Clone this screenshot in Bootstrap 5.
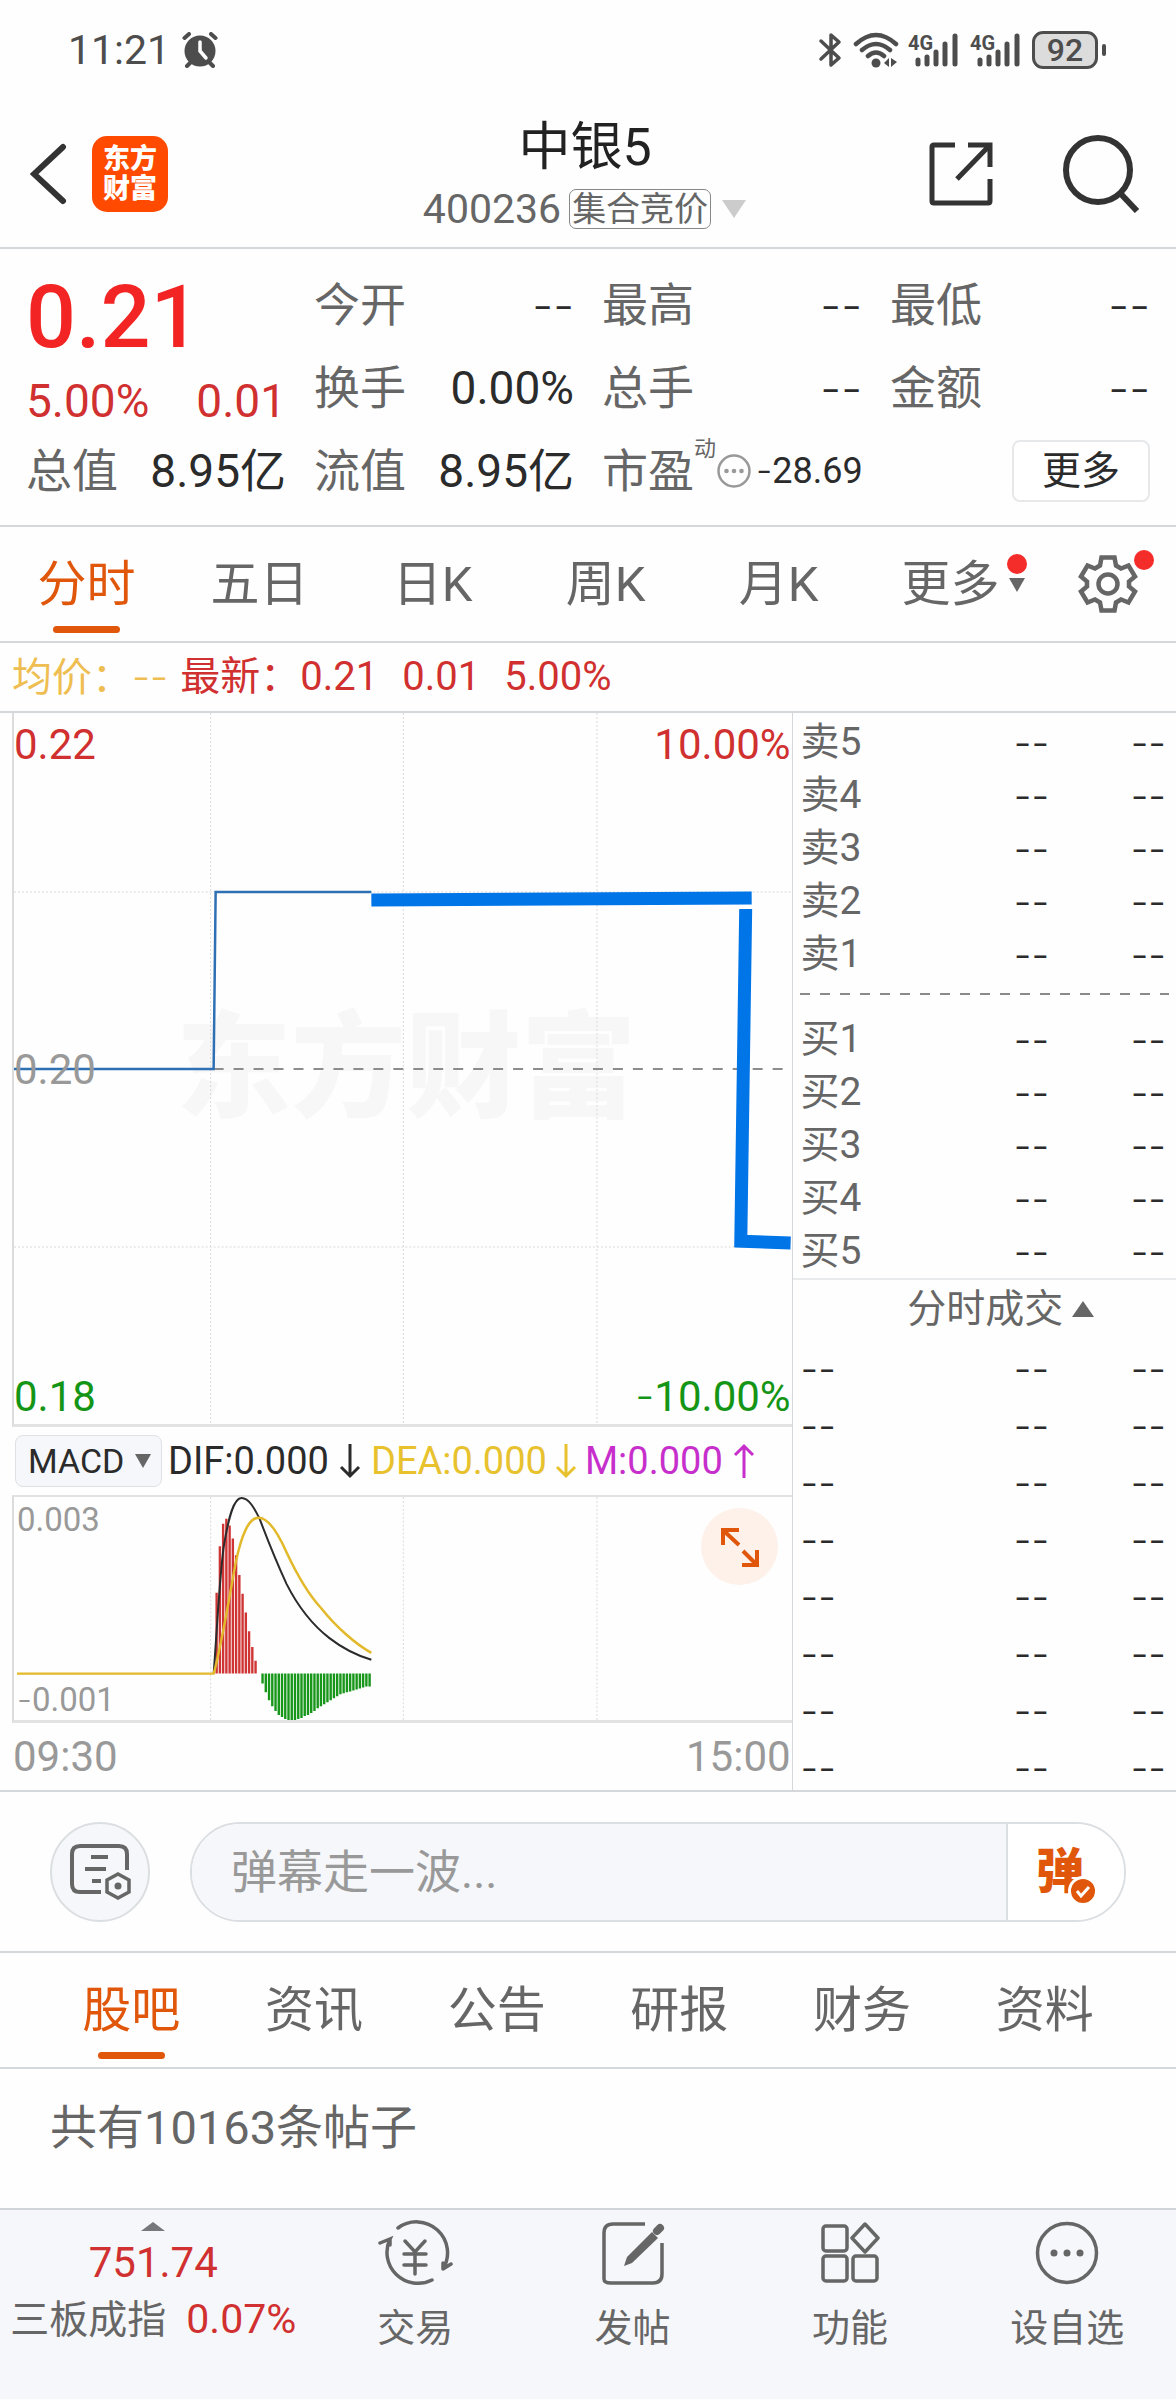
<!DOCTYPE html>
<html lang="zh-CN">
<head>
<meta charset="utf-8">
<meta name="viewport" content="width=device-width, initial-scale=1">
<title>中银5 400236</title>
<link rel="stylesheet" href="https://cdn.jsdelivr.net/npm/bootstrap@5.3.0/dist/css/bootstrap.min.css">
<style>
  :root { --ink:#2b2b2b; --grey:#666; --pale:#999; --line:#d5d8da; --soft:#f6f7fa; --red:#d0302f; --orange:#e0570c; --green:#159515; --gold:#e8c22e; }
  body { font-family: Roboto, "Noto Sans CJK SC", sans-serif; font-size: 46px; line-height: 60px; color: var(--grey); background: #fefefe; }
  svg { display: block; flex: none; }
  button { font-family: inherit; }
  .plain-btn { border: 0; background: none; padding: 0; color: inherit; display: block; }
  .rule { border-bottom: 2px solid var(--line); }
  .dash { font-family: Inter, sans-serif; font-weight: 300; }
  .ink { color: var(--ink); }
  .up { color: var(--red); }
  .down { color: var(--green); }
  .gold { color: var(--gold); }
  .violet { color: #c62fcb; }

  .statusbar { height: 100px; padding: 0 70px 0 68px; color: #4d4d4d; font-size: 41px; }
  .battery { width: 66px; height: 38px; border: 3px solid #4d4d4d; border-radius: 11px; background: #dcdcdc; font-size: 32px; line-height: 32px; font-weight: 500; }
  .battery-nub { width: 4px; height: 12px; border-radius: 2px; background: #4d4d4d; }

  .topbar { display: grid; grid-template-columns: 1fr auto 1fr; height: 149px; padding: 0 36px 0 30px; }
  .brand { width: 76px; height: 76px; border-radius: 15px; background: #ff4a00; color: #fff; font-size: 27px; line-height: 30px; font-weight: 900; }
  .stock-name { font-size: 52px; line-height: 62px; font-weight: 400; color: #222; margin: 0; }
  .stock-code { font-size: 41px; line-height: 52px; }
  .phase { border: 1px solid #888; border-radius: 7px; font-size: 34px; line-height: 38px; padding: 0 2px; }

  .quote { padding: 14px 26px 13px; border-bottom: 2px solid var(--line); }
  .quote .row { --bs-gutter-x: 28px; }
  .line { display: flex; justify-content: space-between; align-items: center; height: 83px; white-space: nowrap; }
  .price { font-size: 88px; line-height: 108px; font-weight: 500; color: #f32524; }
  .change { font-size: 46px; line-height: 60px; margin-bottom: -2px; }
  .val { color: var(--ink); }
  .more-btn { width: 138px; border: 2px solid #e6e8ea; border-radius: 8px; background: #fff; color: var(--ink); font-size: 39px; line-height: 58px; padding: 0; }
  .tiny { font-size: 22px; line-height: 24px; }
  .pe { font-size: 36px; }

  .period { display: grid; grid-template-columns: repeat(5, 173fr) 197fr 114fr; height: 116px; }
  .tab-link { display: flex; flex-direction: column; align-items: center; justify-content: center; font-size: 49px; line-height: 60px; color: var(--grey); text-decoration: none; position: relative; }
  .tab-link.active { color: var(--orange); }
  .tab-link.active::after { content: ""; position: absolute; bottom: 8px; width: 67px; height: 7px; border-radius: 4px; background: var(--orange); }
  .period .tab-link { padding-top: 2px; }
  .dot { position: absolute; width: 20px; height: 20px; border-radius: 50%; background: #f42c2a; top: -24px; left: 50%; margin-left: -10px; }
  .dot-gear { top: -4px; left: auto; right: -16px; }

  .legend-bar { font-size: 40px; height: 70px; padding-left: 12px; }
  .legend-gold { color: #efbe52; }

  .chart-side { width: 67.4%; padding-left: 12px; border-right: 1px solid var(--line); }
  .book-side { width: 32.6%; }
  .plot { position: relative; border-left: 2px solid #dcdcdc; border-bottom: 3px solid #e2e2e2; }
  .plot svg.canvas { position: relative; width: 100%; }
  .plot-label { position: absolute; font-size: 42px; line-height: 48px; left: 0; }
  .plot-label.end { left: auto; right: 1px; }
  .plot-label.mid { top: 50%; margin-top: -23px; color: var(--pale); }
  .plot-label.top-edge { top: 8px; }
  .plot-label.low-edge { bottom: 3px; }
  .plot-label.sub { font-size: 33px; line-height: 40px; left: 3px; color: var(--pale); }
  .plot-label.sub.top-edge { top: 3px; }
  .plot-label.sub.low-edge { bottom: 0; }
  .watermark { position: absolute; inset: 0; display: flex; align-items: center; padding-left: 162px; font-size: 115px; font-weight: 900; color: #f7f7f7; }
  .indicator { height: 68px; padding-left: 3px; font-size: 38px; line-height: 50px; white-space: nowrap; }
  .pick { position: relative; width: 147px; margin-right: 6px; }
  .pick select { appearance: none; width: 100%; height: 52px; border: 1px solid #dfe1e4; border-radius: 8px; background: var(--soft); color: var(--ink); font: 34px Roboto, sans-serif; padding: 0 0 0 12px; }
  .pick svg { position: absolute; right: 10px; top: 19px; pointer-events: none; }
  .arrow { margin: 0 10px; }
  .macd-plot { border-top: 2px solid #e2e2e2; }
  .expand { position: absolute; right: 14px; top: 11px; width: 77px; height: 77px; border-radius: 50%; background: #fdf1ea; }
  .times { font-size: 42px; height: 67px; color: var(--pale); padding: 0 1px; }

  .book { width: 100%; font-size: 39px; line-height: 53px; table-layout: fixed; }
  .book th { font-weight: 400; padding: 0; width: 40%; }
  .book td { padding: 0; text-align: right; color: var(--ink); }
  .book td:nth-child(2) { width: 28%; }
  .book-wrap { padding: 0 10px 0 8px; }
  .asks { padding-top: 3px; }
  .spread { height: 2px; margin: 12px 7px 18px; background: repeating-linear-gradient(90deg, #8a8a8a 0 10px, transparent 10px 20px); }
  .deals-title { border-top: 2px solid #e8eaeb; font-size: 39px; line-height: 58px; padding-left: 34px; }
  .deals { line-height: 45px; }
  .deals th { color: var(--ink); font-weight: 300; }
  .deals tr:not(:last-child) > * { padding-bottom: 12px; }

  .danmu { padding: 30px 50px 29px; gap: 40px; border-top: 2px solid var(--line); border-bottom: 2px solid var(--line); }
  .round-btn { width: 100px; height: 100px; border: 2px solid #dcdfe2; border-radius: 50%; background: var(--soft); padding: 0; flex: none; }
  .pill { height: 100px; border: 2px solid #dcdfe2; border-radius: 50px; overflow: hidden; }
  .pill input { border: 0; background: var(--soft); font-size: 46px; padding: 0 39px; min-width: 0; color: var(--ink); outline: 0; }
  .pill input::placeholder { color: var(--pale); opacity: 1; }
  .dan { width: 118px; border: 0; border-left: 2px solid #dcdfe2; background: #fff; color: var(--orange); font-size: 48px; line-height: 60px; font-weight: 900; padding: 0 12px 0 0; }
  .dan-mark { position: relative; display: inline-block; }
  .dan-mark svg { position: absolute; right: -14px; bottom: -4px; }

  .sections { display: grid; grid-template-columns: repeat(6, 1fr); height: 116px; padding: 0 40px; }
  .sections .tab-link { padding-top: 2px; }
  .posts { height: 139px; padding: 29px 50px; font-size: 47px; }

  .dock { display: grid; grid-template-columns: 306fr repeat(4, 217fr); height: 191px; background: var(--soft); border-top: 2px solid #d0d5da; }
  .dock a { color: var(--grey); text-decoration: none; }
  .dock-item { font-size: 38px; line-height: 50px; padding-top: 7px; display: flex; flex-direction: column; align-items: center; gap: 14px; }
  .index-name { font-size: 39px; line-height: 56px; white-space: nowrap; }
  .index-pct { font-size: 41px; margin-left: 20px; }
  .index-val { font-size: 42px; line-height: 56px; }
</style>
</head>
<body>

<header>
  <div class="statusbar d-flex align-items-center justify-content-between">
    <div class="d-flex align-items-center gap-2">
      <span>11:21</span>
      <svg class="ms-1" width="36" height="36" viewBox="0 0 36 36" fill="none" stroke="#4d4d4d" stroke-width="4" stroke-linecap="round"><circle cx="18" cy="19" r="15.500" fill="#4d4d4d" stroke="none"/><path d="M2.500 6 7 2M33.500 6 29 2M5 34l4-4M31 34l-4-4"/><path d="M18 10v9l6 7" stroke="#fff" stroke-width="3.500"/></svg>
    </div>
    <div class="d-flex align-items-center">
      <svg class="me-2" width="26" height="36" viewBox="0 0 26 36" fill="none" stroke="#4d4d4d" stroke-width="3.500" stroke-linejoin="round" stroke-linecap="round"><path d="M3 9 21 26l-8 7V3l8 7L3 27"/></svg>
      <svg class="me-2" width="48" height="36" viewBox="0 0 48 36" fill="none" stroke="#4d4d4d" stroke-width="4.500" stroke-linecap="round"><path d="M4 12Q24-6 44 12M10 18Q24 6 38 18M16 24Q24 17 32 24"/><circle cx="24" cy="31" r="4.500" fill="#4d4d4d" stroke="none"/><path d="M37 26v9l-5-4zM39 26v9l6-5z" fill="#4d4d4d" stroke="none"/></svg>
      <svg class="me-2" width="54" height="36" viewBox="0 0 54 36" stroke="#4d4d4d" stroke-width="5" stroke-linecap="round"><text x="0" y="18" font-family="Roboto" font-weight="700" font-size="20" fill="#4d4d4d" stroke="none">4G</text><path d="M10 28v4M19 25v7M28 20v12M37 12v20M47 4v28"/></svg>
      <svg class="me-2" width="54" height="36" viewBox="0 0 54 36" stroke="#4d4d4d" stroke-width="5" stroke-linecap="round"><text x="0" y="18" font-family="Roboto" font-weight="700" font-size="20" fill="#4d4d4d" stroke="none">4G</text><path d="M10 28v4M19 25v7M28 20v12M37 12v20M47 4v28"/></svg>
      <span class="battery text-center">92</span><span class="battery-nub ms-1"></span>
    </div>
  </div>

  <div class="topbar rule align-items-center">
    <div class="d-flex align-items-center gap-4">
      <button class="plain-btn" type="button" aria-label="返回"><svg width="38" height="64" viewBox="0 0 38 64" fill="none" stroke="#333" stroke-width="6" stroke-linecap="round"><path d="M33 5 4 32l29 27"/></svg></button>
      <a href="#" class="brand text-decoration-none d-flex flex-column align-items-center justify-content-center"><span>东方</span><span>财富</span></a>
    </div>
    <div class="text-center pt-1">
      <h1 class="stock-name">中银5</h1>
      <div class="stock-code d-flex align-items-center mt-1">
        <span>400236</span><span class="phase ms-2">集合竞价</span>
        <svg class="ms-2" width="28" height="18" viewBox="0 0 28 18"><path d="M3 0h24L15 18z" fill="#ccc"/></svg>
      </div>
    </div>
    <div class="d-flex align-items-center justify-content-end">
      <button class="plain-btn me-5" type="button" aria-label="分享"><svg class="me-3" width="70" height="66" viewBox="0 0 70 66" fill="none" stroke="#333" stroke-width="5"><path d="M27 4H6q-2 0-2 2v54q0 2 2 2h54q2 0 2-2V38M40 4h22v22M61 5 29 38"/></svg></button>
      <button class="plain-btn" type="button" aria-label="搜索"><svg width="78" height="78" viewBox="0 0 78 78" fill="none" stroke="#333" stroke-width="6"><circle cx="36" cy="35" r="32"/><path d="M58 58l17 18"/></svg></button>
    </div>
  </div>
</header>

<main>
  <section class="quote">
    <div class="row">
      <div class="col-3">
        <div class="price">0.21</div>
        <div class="change up d-flex justify-content-between"><span>5.00%</span><span>0.01</span></div>
        <div class="line"><span>总值</span><span class="val">8.95亿</span></div>
      </div>
      <div class="col-3">
        <div class="line"><span>今开</span><span class="val dash">--</span></div>
        <div class="line"><span>换手</span><span class="val">0.00%</span></div>
        <div class="line"><span>流值</span><span class="val">8.95亿</span></div>
      </div>
      <div class="col-3">
        <div class="line"><span>最高</span><span class="val dash">--</span></div>
        <div class="line"><span>总手</span><span class="val dash">--</span></div>
        <div class="line">
          <span>市盈</span><span class="tiny align-self-start pt-2">动</span>
          <svg width="36" height="36" viewBox="0 0 36 36"><circle cx="18" cy="18" r="15.500" fill="none" stroke="#999" stroke-width="2.500"/><g fill="#999"><circle cx="10.500" cy="18" r="2.300"/><circle cx="18" cy="18" r="2.300"/><circle cx="25.500" cy="18" r="2.300"/></g></svg>
          <span class="val pe ms-1"><span class="dash">-</span>28.69</span>
        </div>
      </div>
      <div class="col-3">
        <div class="line"><span>最低</span><span class="val dash">--</span></div>
        <div class="line"><span>金额</span><span class="val dash">--</span></div>
        <div class="line justify-content-end"><button class="more-btn" type="button">更多</button></div>
      </div>
    </div>
  </section>

  <nav class="period rule">
    <a href="#" class="tab-link active">分时</a>
    <a href="#" class="tab-link">五日</a>
    <a href="#" class="tab-link">日K</a>
    <a href="#" class="tab-link">周K</a>
    <a href="#" class="tab-link">月K</a>
    <a href="#" class="tab-link flex-row">更多<span class="position-relative ms-2"><svg width="18" height="14" viewBox="0 0 18 14"><path d="M1 0h16L9 14z" fill="#666"/></svg><i class="dot"></i></span></a>
    <button class="plain-btn d-flex align-items-center ps-3" type="button" aria-label="设置"><span class="position-relative"><svg width="60" height="60" viewBox="0 0 60 60" fill="none" stroke="#666" stroke-width="4.500"><path d="M23.500 3.500h13l1.500 8 5 3 7.500-3 6.500 11-6 5v5l6 5-6.500 11-7.500-3-5 3-1.500 8h-13l-1.500-8-5-3-7.500 3-6.500-11 6-5v-5l-6-5 6.500-11 7.500 3 5-3z"/><circle cx="30" cy="30" r="9.500"/></svg><i class="dot dot-gear"></i></span></button>
  </nav>

  <div class="legend-bar rule d-flex align-items-center">
    <span class="legend-gold">均价：<span class="dash">--</span></span>
    <span class="up ms-2 ps-1 d-flex gap-4"><span>最新：0.21</span><span>0.01</span><span>5.00%</span></span>
  </div>

  <section class="d-flex">
    <div class="chart-side">
      <div class="plot">
        <div class="watermark">东方财富</div>
        <svg class="canvas" height="711" viewBox="0 0 779 711" preserveAspectRatio="none" fill="none">
          <path d="M197 0v711M390 0v711M584 0v711M0 179h779M0 534h779" stroke="#dadada" stroke-dasharray="2 2"/>
          <path d="M0 356h779" stroke="#8c8c8c" stroke-width="2" stroke-dasharray="10 10"/>
          <path d="M0 356h200l2-177h156" stroke="#2f6fb3" stroke-width="2.500"/>
          <path d="M358 187 739 185M733 196 728 534M722 528l56 2" stroke="#0075e8" stroke-width="13"/>
        </svg>
        <span class="plot-label top-edge up">0.22</span>
        <span class="plot-label top-edge end up">10.00%</span>
        <span class="plot-label mid">0.20</span>
        <span class="plot-label low-edge down">0.18</span>
        <span class="plot-label low-edge end down"><span class="dash">-</span>10.00%</span>
      </div>

      <div class="indicator d-flex align-items-center">
        <div class="pick">
          <select aria-label="指标"><option>MACD</option></select>
          <svg width="18" height="14" viewBox="0 0 18 14"><path d="M1 0h16L9 14z" fill="#666"/></svg>
        </div>
        <span class="ink">DIF:0.000</span>
        <svg class="arrow" width="22" height="36" viewBox="0 0 22 36" fill="none" stroke="#2b2b2b" stroke-width="3"><path d="M11 1v32M2 24l9 9 9-9"/></svg>
        <span class="gold">DEA:0.000</span>
        <svg class="mx-2" width="22" height="36" viewBox="0 0 22 36" fill="none" stroke="#e8c22e" stroke-width="3"><path d="M11 1v32M2 24l9 9 9-9"/></svg>
        <span class="violet">M:0.000</span>
        <svg class="arrow" width="22" height="36" viewBox="0 0 22 36" fill="none" stroke="#c62fcb" stroke-width="3"><path d="M11 35V3M2 12l9-9 9 9"/></svg>
      </div>

      <div class="plot macd-plot">
        <svg class="canvas" height="223" viewBox="0 0 779 226" preserveAspectRatio="none" fill="none">
          <path d="M197 0v226M390 0v226M584 0v226" stroke="#dadada" stroke-dasharray="2 2"/>
          <path id="gain" stroke="#cf3535" stroke-width="2.400"/>
          <path id="loss" stroke="#17961a" stroke-width="2.400"/>
          <path d="M200 179C203 140 206 80 210 51C215 20 220 1 228 1C236 1 242 14 246 22C252 38 262 64 273 88C286 114 302 132 316 143C330 154 345 161 358 165" stroke="#2b2b2b" stroke-width="2"/>
          <path d="M3 179h197C207 155 216 100 222 67C228 38 235 21 245 21C256 21 266 40 273 56C285 82 296 100 308 113C322 131 342 149 358 158" stroke="#e3b92c" stroke-width="2.500"/>
        </svg>
        <span class="plot-label sub top-edge">0.003</span>
        <span class="plot-label sub low-edge"><span class="dash">-</span>0.001</span>
        <button class="plain-btn expand" type="button" aria-label="全屏"><svg width="77" height="77" viewBox="0 0 77 77" fill="none" stroke="#e0570c" stroke-width="4"><path d="M22 37V22h16M23 23l15 14M56 42v15H41M55 56 42 43"/></svg></button>
      </div>

      <div class="times d-flex align-items-center justify-content-between"><span>09:30</span><span>15:00</span></div>
    </div>

    <div class="book-side">
      <div class="book-wrap asks">
        <table class="book">
          <tr><th scope="row">卖5</th><td class="dash">--</td><td class="dash">--</td></tr>
          <tr><th scope="row">卖4</th><td class="dash">--</td><td class="dash">--</td></tr>
          <tr><th scope="row">卖3</th><td class="dash">--</td><td class="dash">--</td></tr>
          <tr><th scope="row">卖2</th><td class="dash">--</td><td class="dash">--</td></tr>
          <tr><th scope="row">卖1</th><td class="dash">--</td><td class="dash">--</td></tr>
        </table>
      </div>
      <div class="spread"></div>
      <div class="book-wrap">
        <table class="book">
          <tr><th scope="row">买1</th><td class="dash">--</td><td class="dash">--</td></tr>
          <tr><th scope="row">买2</th><td class="dash">--</td><td class="dash">--</td></tr>
          <tr><th scope="row">买3</th><td class="dash">--</td><td class="dash">--</td></tr>
          <tr><th scope="row">买4</th><td class="dash">--</td><td class="dash">--</td></tr>
          <tr><th scope="row">买5</th><td class="dash">--</td><td class="dash">--</td></tr>
        </table>
      </div>
      <div class="deals-title d-flex align-items-center justify-content-center gap-2 mb-2"><span>分时成交</span><svg width="24" height="18" viewBox="0 0 24 18"><path d="M12 1 23 17H1z" fill="#666"/></svg></div>
      <div class="book-wrap">
        <table class="book deals dash">
          <tr><th>--</th><td>--</td><td>--</td></tr>
          <tr><th>--</th><td>--</td><td>--</td></tr>
          <tr><th>--</th><td>--</td><td>--</td></tr>
          <tr><th>--</th><td>--</td><td>--</td></tr>
          <tr><th>--</th><td>--</td><td>--</td></tr>
          <tr><th>--</th><td>--</td><td>--</td></tr>
          <tr><th>--</th><td>--</td><td>--</td></tr>
          <tr><th>--</th><td>--</td><td>--</td></tr>
        </table>
      </div>
    </div>
  </section>

  <section class="danmu d-flex align-items-center">
    <button class="round-btn d-flex align-items-center justify-content-center" type="button" aria-label="弹幕设置"><svg width="62" height="58" viewBox="0 0 62 58" fill="none" stroke="#666" stroke-width="4"><path d="M32 49H11q-8 0-8-8V11q0-8 8-8h39q8 0 8 8v16M22 14h17M16 26h21M23 38h9"/><path d="M49 31l11 6v12l-11 6-11-6V37z" stroke-width="3.500"/><circle cx="49" cy="43" r="3.500" fill="#666" stroke="none"/></svg></button>
    <div class="pill d-flex flex-grow-1">
      <input class="flex-grow-1" type="text" placeholder="弹幕走一波..." aria-label="弹幕">
      <button class="dan" type="button"><span class="dan-mark">弹<svg width="30" height="30" viewBox="0 0 30 30"><circle cx="15" cy="15" r="13.500" fill="#e0570c" stroke="#fff" stroke-width="3"/><path d="M9 15l4 5 8-9" fill="none" stroke="#fff" stroke-width="3"/></svg></span></button>
    </div>
  </section>

  <nav class="sections rule">
    <a href="#" class="tab-link active">股吧</a>
    <a href="#" class="tab-link">资讯</a>
    <a href="#" class="tab-link">公告</a>
    <a href="#" class="tab-link">研报</a>
    <a href="#" class="tab-link">财务</a>
    <a href="#" class="tab-link">资料</a>
  </nav>

  <div class="posts">共有10163条帖子</div>
</main>

<footer class="dock">
  <a href="#" class="d-flex flex-column align-items-center pt-2">
    <svg class="mt-1" width="24" height="9" viewBox="0 0 24 9"><path d="M12 0 24 9H0z" fill="#77787c"/></svg>
    <span class="index-val up pt-1">751.74</span>
    <span class="index-name">三板成指<span class="index-pct up">0.07%</span></span>
  </a>
  <a href="#" class="dock-item"><svg width="76" height="72" viewBox="0 0 76 72" fill="none" stroke="#666" stroke-width="3.500" stroke-linecap="round"><path d="M21 11A31 31 0 0 1 66 52l8-5M55 63A31 31 0 0 1 13 22L3 26M13 22v6M66 52v-6"/><path d="M28 24l10 11 10-11M38 35v22M27 37h22M27 48h22"/></svg>交易</a>
  <a href="#" class="dock-item"><svg width="64" height="72" viewBox="0 0 64 72" fill="none" stroke="#666" stroke-width="3.500"><path d="M44 7H12q-9 0-9 9v46q0 4 7 4h42q9 0 9-9V26"/><path d="M23 49l3-9 25-25 6 6-26 25z" fill="#666" stroke="none"/><path d="M56 14l3-3" stroke-width="8" stroke-linecap="round"/></svg>发帖</a>
  <a href="#" class="dock-item"><svg width="60" height="72" viewBox="0 0 60 72" fill="none" stroke="#666" stroke-width="3.500" stroke-linejoin="round"><rect x="3" y="9" width="24" height="25" rx="3"/><rect x="3" y="39" width="24" height="25" rx="3"/><rect x="33" y="39" width="24" height="25" rx="3"/><path d="M45 7l13 14-13 14-13-14z"/></svg>功能</a>
  <a href="#" class="dock-item"><svg width="66" height="72" viewBox="0 0 66 72"><circle cx="33" cy="36" r="29.500" fill="none" stroke="#666" stroke-width="3.500"/><g fill="#666"><circle cx="20" cy="36" r="3.500"/><circle cx="33" cy="36" r="3.500"/><circle cx="46" cy="36" r="3.500"/></g></svg>设自选</a>
</footer>

<script src="https://cdn.jsdelivr.net/npm/bootstrap@5.3.0/dist/js/bootstrap.bundle.min.js"></script>
<script>
  // MACD histogram: one vertical stroke per minute, measured from the zero line
  const zero = 179;
  const gain = [97, 50, 27, 22, 29, 42, 59, 79, 98, 117, 136, 152, 166];
  const loss = [189, 198, 206, 212, 217, 221, 223, 225, 226, 226, 226, 225, 224, 222, 221, 219, 217, 214, 212, 210, 208, 206, 204, 202, 200, 199, 198, 197, 196, 195, 194, 193, 192, 192];
  const bars = (ends, start) => ends.map((y, i) => `M${start + i * 3.25} ${zero}V${y}`).join('');
  document.getElementById('gain').setAttribute('d', bars(gain, 203));
  document.getElementById('loss').setAttribute('d', bars(loss, 249));
</script>
</body>
</html>
